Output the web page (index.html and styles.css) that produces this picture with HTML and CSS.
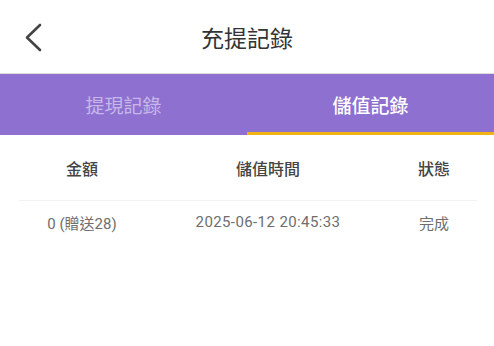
FILE: index.html
```html
<!DOCTYPE html>
<html lang="zh-Hant">
<head>
    <meta charset="UTF-8">
    <meta name="viewport" content="width=device-width, initial-scale=1.0">
    <title>充提記錄</title>
    <link rel="stylesheet" href="styles.css">
</head>
<body>
    <div class="page">
        <!-- Barre de navigation -->
        <div class="nav-bar">
            <span class="back-btn">
                <svg width="20" height="30" viewBox="0 0 20 30">
                    <polyline points="16,2 3,14.5 16,27" fill="none" stroke="#444" stroke-width="2.6" stroke-linecap="round" stroke-linejoin="round"/>
                </svg>
            </span>
            <h1 class="nav-title">充提記錄</h1>
        </div>

        <!-- Onglets -->
        <div class="tabs">
            <div class="tab">提現記錄</div>
            <div class="tab active">儲值記錄</div>
        </div>

        <!-- Tableau des dépôts -->
        <div class="records">
            <div class="record-row record-head">
                <span>金額</span>
                <span>儲值時間</span>
                <span>狀態</span>
            </div>
            <div class="record-row">
                <span>0 (贈送28)</span>
                <span class="record-time">2025-06-12 20:45:33</span>
                <span>完成</span>
            </div>
        </div>
    </div>
</body>
</html>
```

FILE: styles.css
```css
body {
    margin: 0;
    padding: 0;
    background-color: #fff;
    font-family: Roboto, "Noto Sans CJK TC", sans-serif;
}
.page {
    width: 100%;
}
.nav-bar {
    height: 73px;
    display: flex;
    align-items: center;
    justify-content: center;
    position: relative;
    border-bottom: 1px solid #ddd;
}
.back-btn {
    position: absolute;
    left: 24px;
    top: 23px;
}
.nav-title {
    margin: 0;
    font-size: 23px;
    font-weight: 400;
    color: #333;
}
.tabs {
    display: flex;
    height: 61px;
    background-color: #8d70cf;
}
.tab {
    flex: 1;
    display: flex;
    align-items: center;
    justify-content: center;
    font-size: 19px;
    color: #c8b8ea;
    border-bottom: 3px solid transparent;
    padding-top: 3px;
}
.tab.active {
    color: #fff;
    font-weight: 500;
    border-bottom-color: #f0b414;
}
.records {
    padding: 0 17px 0 19px;
}
.record-row {
    display: grid;
    grid-template-columns: 126px 1fr 86px;
    height: 42px;
    align-items: center;
    text-align: center;
    font-size: 15px;
    color: #6e6e6e;
}
.record-time {
    letter-spacing: 0.4px;
}
.record-head {
    height: 65px;
    border-bottom: 1px solid #f2f2f2;
    font-size: 16px;
    font-weight: 500;
    color: #444;
}
```
